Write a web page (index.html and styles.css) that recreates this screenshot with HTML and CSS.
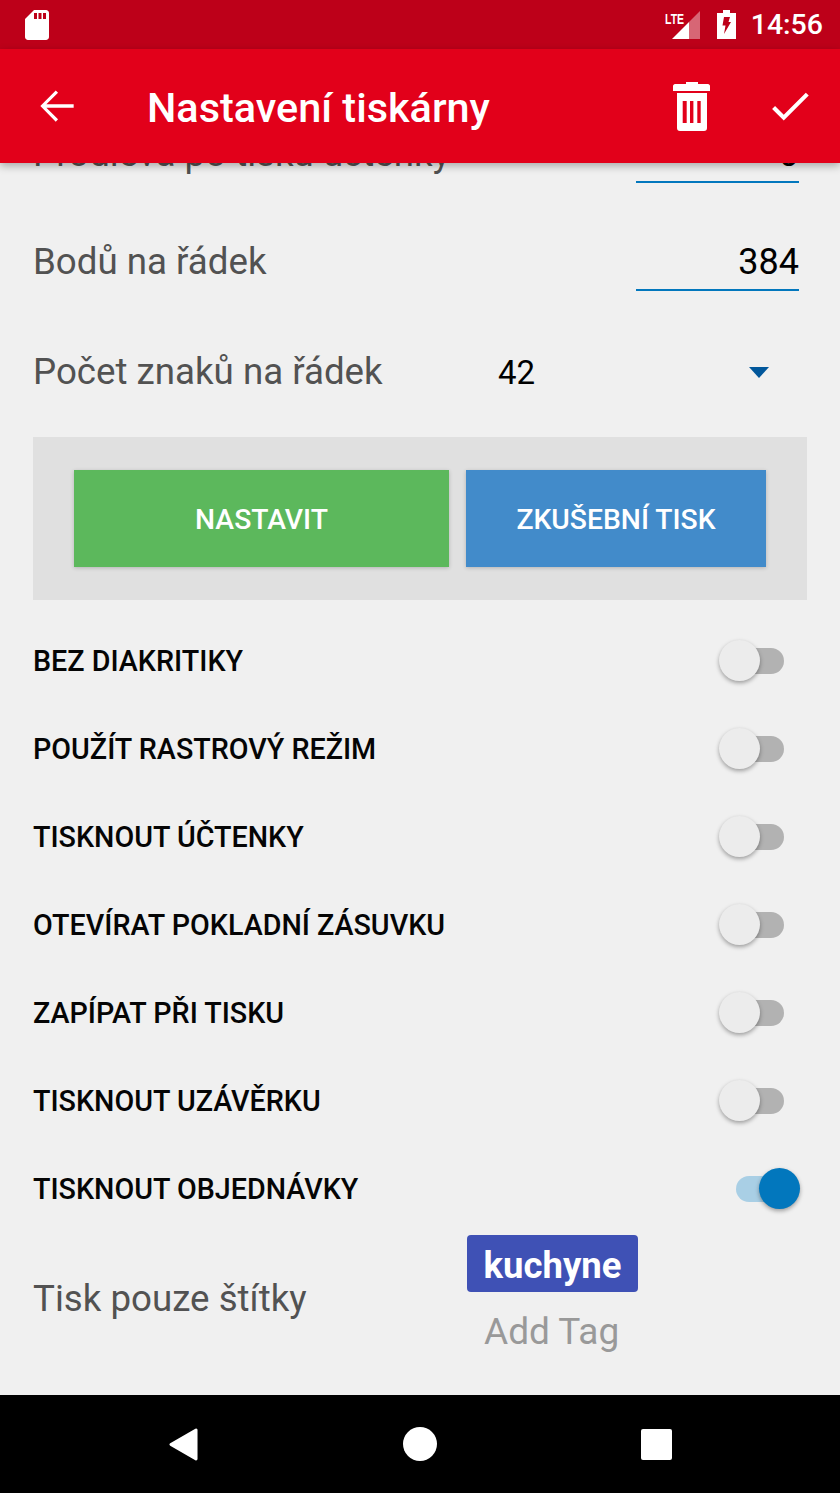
FILE: index.html
```html
<!DOCTYPE html>
<html lang="cs">
<head>
<meta charset="utf-8">
<title>Nastavení tiskárny</title>
<link rel="stylesheet" href="styles.css">
</head>
<body>
<div class="screen">
  <header class="statusbar">
    <svg class="sd-icon" viewBox="0 0 24 24"><path fill="#fff" d="M18 2h-8L4.02 8 4 20c0 1.1.9 2 2 2h12c1.1 0 2-.9 2-2V4c0-1.1-.9-2-2-2zm-6 6h-2V4h2v4zm3 0h-2V4h2v4zm3 0h-2V4h2v4z"/></svg>
    <div class="status-right">
      <div class="signal">
        <svg class="signal-icon" viewBox="0 0 28 28"><path fill="#fff" fill-opacity=".4" d="M28 0v28H17V11z"/><path fill="#fff" d="M17 11v17H0z"/></svg>
        <span class="lte">LTE</span>
      </div>
      <svg class="battery-icon" viewBox="0 0 19 29"><path fill="#fff" d="M6 0h7v3h6v26H0V3h6z"/><path fill="#bd0019" d="M7 7h6l-1.500 5H14L7 24l1.500-8.500H5.500z"/></svg>
      <span class="clock">14:56</span>
    </div>
  </header>
  <div class="appbar">
    <svg class="icon back-icon" viewBox="0 0 24 24"><path fill="#fff" d="M20 11.200H6.900l5.600-5.600L11.400 4.500 4 12l7.400 7.500 1.100-1.100-5.600-5.600H20z"/></svg>
    <h1 class="title">Nastavení tiskárny</h1>
    <svg class="trash-icon" viewBox="0 0 37 49"><path fill="#fff" fill-rule="evenodd" d="M13 0h12v2h10c1 0 2 1 2 2v5H0V4c0-1 1-2 2-2h11zM4 11h30v35c0 2-1 3-3 3H7c-2 0-3-1-3-3zm5.700 8v22h4V19zm7.300 0v22h3.400V19zm7.300 0v22h3.400V19z"/></svg>
    <svg class="icon check-icon" viewBox="0 0 24 24"><path fill="#fff" d="M9 16.170 4.830 12l-1.420 1.410L9 19 21 7l-1.410-1.410z"/></svg>
  </div>
  <main class="content">
    <div class="scroller">
      <div class="field-row">
        <span class="field-label">Prodleva po tisku účtenky</span>
        <span class="field-input">0</span>
      </div>
      <div class="field-row">
        <span class="field-label">Bodů na řádek</span>
        <span class="field-input">384</span>
      </div>
      <div class="select-row">
        <span class="select-label">Počet znaků na řádek</span>
        <span class="select-value">42</span>
        <span class="select-arrow"></span>
      </div>
      <div class="panel">
        <button class="btn btn-green">NASTAVIT</button>
        <button class="btn btn-blue">ZKUŠEBNÍ TISK</button>
      </div>
      <ul class="switches">
        <li class="switch-row"><span>BEZ DIAKRITIKY</span><span class="switch"></span></li>
        <li class="switch-row"><span>POUŽÍT RASTROVÝ REŽIM</span><span class="switch"></span></li>
        <li class="switch-row"><span>TISKNOUT ÚČTENKY</span><span class="switch"></span></li>
        <li class="switch-row"><span>OTEVÍRAT POKLADNÍ ZÁSUVKU</span><span class="switch"></span></li>
        <li class="switch-row"><span>ZAPÍPAT PŘI TISKU</span><span class="switch"></span></li>
        <li class="switch-row"><span>TISKNOUT UZÁVĚRKU</span><span class="switch"></span></li>
        <li class="switch-row"><span>TISKNOUT OBJEDNÁVKY</span><span class="switch switch-on"></span></li>
      </ul>
      <div class="tags-row">
        <span class="tags-label">Tisk pouze štítky</span>
        <div class="tags">
          <span class="tag">kuchyne</span>
          <span class="add-tag">Add Tag</span>
        </div>
      </div>
    </div>
  </main>
  <nav class="navbar">
    <svg class="nav-back" viewBox="0 0 30 34"><path fill="#fff" stroke="#fff" stroke-width="3" stroke-linejoin="round" d="M28 2v30L2 17z"/></svg>
    <span class="nav-home"></span>
    <span class="nav-recent"></span>
  </nav>
</div>
</body>
</html>
```
FILE: styles.css
```css
* { box-sizing: border-box; }
html, body { margin: 0; padding: 0; }
body { font-family: Roboto, "Noto Sans", sans-serif; background: #f0f0f0; }
.screen { width: 840px; height: 1493px; display: flex; flex-direction: column; overflow: hidden; }

.statusbar { height: 49px; flex: none; background: #bd0019; display: flex; align-items: center; justify-content: space-between; padding: 0 17px 0 19px; }
.sd-icon { width: 36px; height: 36px; display: block; }
.status-right { display: flex; align-items: center; }
.signal { position: relative; width: 35px; height: 30px; margin-right: 17px; }
.signal-icon { position: absolute; right: 0; top: 1px; width: 28px; height: 28px; }
.lte { position: absolute; left: 0; top: 1px; font: 700 15px/15px "Liberation Sans", sans-serif; color: #fff; transform: scaleX(.7); transform-origin: left top; }
.battery-icon { width: 19px; height: 29px; margin-right: 15px; display: block; }
.clock { color: #fff; font-size: 28.5px; font-weight: 500; line-height: 36px; }

.appbar { height: 114px; flex: none; background: #e2001a; display: flex; align-items: center; position: relative; z-index: 2; box-shadow: 0 3px 8px rgba(0, 0, 0, .3); padding: 0 25px 0 33px; }
.icon { width: 50px; height: 50px; display: block; flex: none; }
.back-icon { margin-right: 65px; margin-left: -1px; }
.title { margin: 4px 0 0; flex: 1; font-size: 41.4px; font-weight: 500; color: #fff; line-height: 48px; }
.trash-icon { width: 37px; height: 49px; display: block; flex: none; margin-right: 55px; }

.content { flex: 1; overflow: hidden; min-height: 0; background: #f0f0f0; }
.scroller { margin-top: -37px; }
.field-row { display: flex; justify-content: space-between; align-items: center; height: 57px; padding: 0 41px 0 33px; margin-bottom: 51px; }
.field-label, .select-label, .tags-label { font-size: 36.7px; color: #525252; line-height: 44px; }
.field-label { margin-bottom: 2px; }
.field-input { width: 163px; height: 57px; border-bottom: 2px solid #0277bd; text-align: right; font-size: 36px; line-height: 57px; color: #000; }
.select-row { display: flex; align-items: center; height: 56px; padding: 4px 0 0 33px; margin: 3px 0 39px; }
.select-label { width: 465px; flex: none; }
.select-value { font-size: 33px; color: #000; flex: 1; }
.select-arrow { width: 0; height: 0; border-left: 10px solid transparent; border-right: 10px solid transparent; border-top: 11px solid #01579b; margin-right: 71px; }

.panel { margin: 0 33px; padding: 33px 41px; background: #e0e0e0; display: flex; gap: 17px; }
.btn { height: 97px; border: 0; padding: 2px 0 0; color: #fff; font-family: inherit; font-size: 28.3px; font-weight: 500; box-shadow: 0 1px 4px rgba(0, 0, 0, .2); }
.btn-green { flex: 375 0 0; background: #5cb85c; }
.btn-blue { flex: 300 0 0; background: #428bca; }

.switches { list-style: none; margin: 17px 0 0; padding: 0; }
.switch-row { height: 88px; display: flex; align-items: center; justify-content: space-between; padding: 0 56px 0 33px; font-size: 28.7px; font-weight: 500; color: #050505; }
.switch { position: relative; width: 48px; height: 26px; border-radius: 13px; background: #b2b2b2; }
.switch::after { content: ""; position: absolute; left: -17px; top: -8px; width: 41px; height: 41px; border-radius: 50%; background: #ececec; box-shadow: 0 2px 4px rgba(0, 0, 0, .35); }
.switch-on { background: #a9cfe5; }
.switch-on::after { left: 23px; background: #0277bd; }

.tags-row { display: flex; align-items: center; padding-left: 33px; margin-top: 2px; }
.tags-label { width: 434px; flex: none; margin-top: 8px; }
.tags { display: flex; flex-direction: column; align-items: flex-start; }
.tag { width: 171px; height: 57px; border-radius: 4px; background: #3f51b5; color: #fff; font-size: 36.5px; font-weight: 700; line-height: 61px; text-align: center; }
.add-tag { font-size: 37px; line-height: 44px; color: #999; padding-left: 17px; margin-top: 18px; }

.navbar { height: 98px; flex: none; background: #000; display: flex; align-items: center; justify-content: space-between; padding: 0 168px 0 169px; }
.nav-back { width: 29px; height: 33px; display: block; }
.nav-home { width: 34px; height: 34px; border-radius: 50%; background: #fff; }
.nav-recent { width: 31px; height: 31px; border-radius: 2px; background: #fff; }
```
